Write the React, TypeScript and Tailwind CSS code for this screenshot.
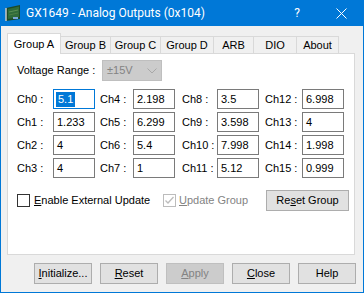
import React from "react";

function Btn({
  children,
  disabled,
  className = "",
}: {
  children: React.ReactNode;
  disabled?: boolean;
  className?: string;
}) {
  return (
    <div
      className={`flex items-center justify-center h-[21px] border ${
        disabled
          ? "border-[#bfbfbf] bg-[#cccccc] text-[#838383]"
          : "border-[#adadad] bg-[#e1e1e1] text-black"
      } ${className}`}
    >
      {children}
    </div>
  );
}

function Input({ value, focused }: { value: string; focused?: boolean }) {
  return (
    <div
      className={`w-[42px] h-[20px] border bg-white flex items-center pl-[2px] ${
        focused ? "border-[#0078d7]" : "border-[#7a7a7a]"
      }`}
    >
      {focused ? (
        <span className="bg-[#0078d7] text-white h-[15px] flex items-center px-[2px]">{value}</span>
      ) : (
        <span className="px-[1px]">{value}</span>
      )}
    </div>
  );
}

const labelW = ["w-[36px]", "w-[33px]", "w-[35px]", "w-[37px]"];
const colW = ["w-[83px]", "w-[82px]", "w-[83px]", "w-[79px]"];

const rows: string[][] = [
  ["5.1", "2.198", "3.5", "6.998"],
  ["1.233", "6.299", "3.598", "4"],
  ["4", "5.4", "7.998", "1.998"],
  ["4", "1", "5.12", "0.999"],
];

const U = ({ c }: { c: string }) => <span className="underline underline-offset-[1px]">{c}</span>;

export default function App() {
  const tabs = [
    { t: "Group B", w: "w-[50px]" },
    { t: "Group C", w: "w-[50px]" },
    { t: "Group D", w: "w-[53px]" },
    { t: "ARB", w: "w-[40px]" },
    { t: "DIO", w: "w-[43px]" },
    { t: "About", w: "w-[42px]" },
  ];
  return (
    <div className="w-[364px] h-[293px] bg-[#f0f0f0] border-x border-b border-[#0078d7] flex flex-col text-[11px] leading-none font-['Liberation_Sans',Arial,sans-serif] text-black overflow-hidden whitespace-nowrap">
      {/* title bar */}
      <div className="h-[26px] bg-[#0078d7] flex items-center text-white shrink-0 text-[12px] font-['Roboto',sans-serif]">
        <svg className="ml-[4px]" width="16" height="18" viewBox="0 0 16 18">
          <polygon points="1,4 15,1 15,15 1,17" fill="#1d4a2a" />
          <polygon points="3,5 14,2.5 14,13 3,15" fill="#2f6b3a" />
          <line x1="1" y1="4" x2="1" y2="17" stroke="#c8c8c8" strokeWidth="1.5" />
          <line x1="4" y1="8" x2="13" y2="6" stroke="#5b8f55" strokeWidth="1" />
          <line x1="4" y1="11" x2="13" y2="9" stroke="#4b7f45" strokeWidth="1" />
          <rect x="8" y="13" width="5" height="2" fill="#7aa7d8" />
        </svg>
        <span className="ml-[5px]">GX1649 - Analog Outputs (0x104)</span>
        <span className="ml-auto mr-[36px]">?</span>
        <svg className="mr-[16px]" width="11" height="11" viewBox="0 0 11 11">
          <line x1="0.5" y1="0.5" x2="10.5" y2="10.5" stroke="white" strokeWidth="1" />
          <line x1="10.5" y1="0.5" x2="0.5" y2="10.5" stroke="white" strokeWidth="1" />
        </svg>
      </div>

      <div className="pl-[6px] pt-[7px] flex flex-col">
        {/* tabs */}
        <div className="flex items-end h-[20px]">
          <div className="relative z-10 -mb-px w-[54px] h-[21px] bg-white border-t border-x border-[#d9d9d9] flex items-center justify-center">
            Group A
          </div>
          {tabs.map((t) => (
            <div
              key={t.t}
              className={`${t.w} h-[17px] border-t border-r border-[#d9d9d9] flex items-center justify-center`}
            >
              {t.t}
            </div>
          ))}
        </div>

        {/* panel */}
        <div className="w-[348px] h-[202px] border border-[#d9d9d9] bg-white pl-[9px] pt-[6px] flex flex-col">
          <div className="flex items-center h-[21px]">
            <div className="w-[85px]">Voltage Range :</div>
            <div className="w-[60px] h-[21px] border border-[#bfbfbf] bg-[#cccccc] flex items-center text-[#838383] pl-[4px]">
              <span>±15V</span>
              <svg className="ml-auto mr-[4px]" width="10" height="6" viewBox="0 0 10 6">
                <polyline points="0.5,0.5 5,5 9.5,0.5" fill="none" stroke="#a8a8a8" strokeWidth="1" />
              </svg>
            </div>
          </div>

          <div className="mt-[8px] flex flex-col gap-[3px]">
            {rows.map((r, ri) => (
              <div key={ri} className="flex h-[20px]">
                {r.map((v, ci) => (
                  <div key={ci} className={`${colW[ci]} flex items-center`}>
                    <div className={labelW[ci]}>Ch{ci * 4 + ri} :</div>
                    <Input value={v} focused={ri === 0 && ci === 0} />
                  </div>
                ))}
              </div>
            ))}
          </div>

          <div className="mt-[12px] flex items-center h-[21px]">
            <div className="w-[13px] h-[13px] border border-[#333333] bg-white" />
            <div className="ml-[4px] w-[129px]">
              <U c="E" />nable External Update
            </div>
            <div className="w-[13px] h-[13px] border border-[#bcbcbc] bg-white flex items-center justify-center">
              <svg width="11" height="11" viewBox="0 0 11 11">
                <polyline points="1.5,5.5 4,8 9.5,2" fill="none" stroke="#bcbcbc" strokeWidth="1.3" />
              </svg>
            </div>
            <div className="ml-[3px] text-[#838383]">
              <U c="U" />pdate Group
            </div>
            <Btn className="ml-auto mr-[5px] w-[83px]">
              Re<U c="s" />et Group
            </Btn>
          </div>
        </div>

        {/* bottom buttons */}
        <div className="mt-[8px] pl-[27px] flex gap-[8px]">
          <Btn className="w-[58px]">
            <U c="I" />nitialize...
          </Btn>
          <Btn className="w-[58px]">
            <U c="R" />eset
          </Btn>
          <Btn className="w-[58px]" disabled>
            <U c="A" />pply
          </Btn>
          <Btn className="w-[58px]">
            <U c="C" />lose
          </Btn>
          <Btn className="w-[58px]">Help</Btn>
        </div>
      </div>
    </div>
  );
}
